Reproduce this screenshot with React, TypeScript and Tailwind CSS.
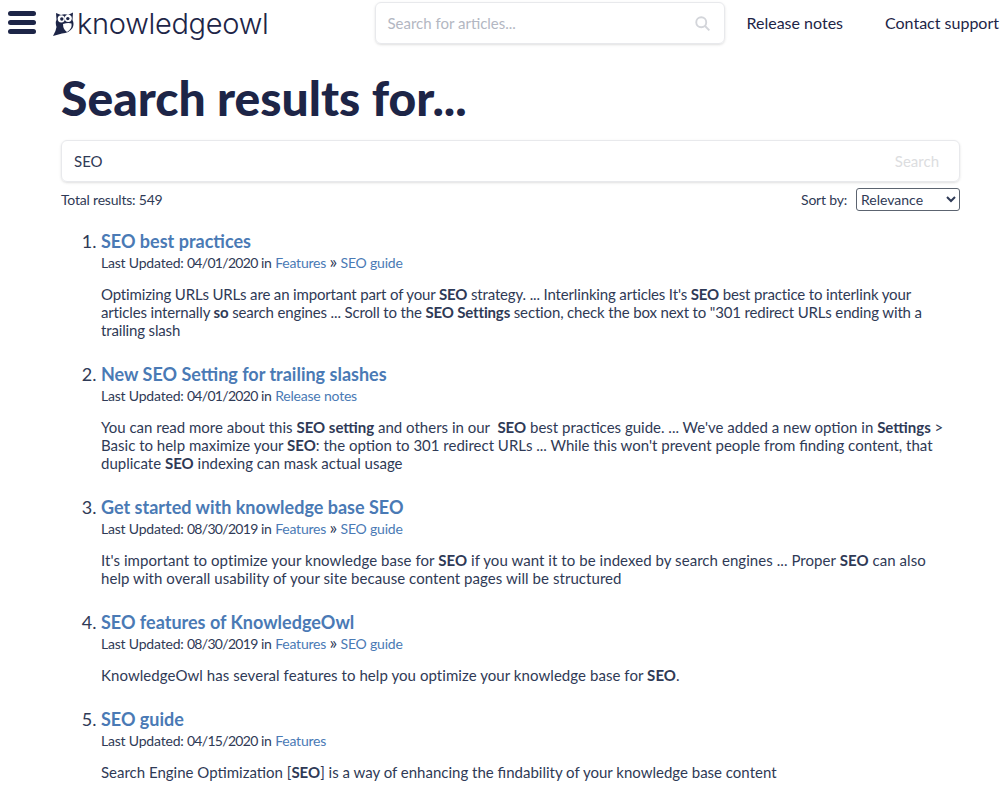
const results = [
  { title: "SEO best practices", date: "04/01/2020", crumbs: ["Features", "SEO guide"], track: "tracking-[-0.15px]", body: [
    <>Optimizing URLs URLs are an important part of your <b>SEO</b> strategy. ... Interlinking articles It's <b>SEO</b> best practice to interlink your articles internally <b>so</b> search engines ... Scroll to the <b>SEO Settings</b> section, check the box next to "301 redirect URLs ending with a trailing slash</>] },
  { title: "New SEO Setting for trailing slashes", date: "04/01/2020", crumbs: ["Release notes"], track: "tracking-normal", body: [
    <>You can read more about this <b>SEO setting</b> and others in our &nbsp;<b>SEO</b> best practices guide. ... We've added a new option in <b>Settings</b> &gt; Basic to help maximize your <b>SEO</b>: the option to 301 redirect URLs ... While this won't prevent people from finding content, that duplicate <b>SEO</b> indexing can mask actual usage</>] },
  { title: "Get started with knowledge base SEO", date: "08/30/2019", crumbs: ["Features", "SEO guide"], track: "tracking-[0.06px]", body: [
    <>It's important to optimize your knowledge base for <b>SEO</b> if you want it to be indexed by search engines ... Proper <b>SEO</b> can also help with overall usability of your site because content pages will be structured</>] },
  { title: "SEO features of KnowledgeOwl", date: "08/30/2019", crumbs: ["Features", "SEO guide"], track: "tracking-[0.06px]", body: [
    <>KnowledgeOwl has several features to help you optimize your knowledge base for <b>SEO</b>.</>] },
  { title: "SEO guide", date: "04/15/2020", crumbs: ["Features"], track: "tracking-normal", body: [
    <>Search Engine Optimization [<b>SEO</b>] is a way of enhancing the findability of your knowledge base content</>] },
];

function Owl() {
  return (
    <svg width="22" height="24" viewBox="0 0 22 24" className="shrink-0">
      <path d="M3 1 L8 3 Q12 1.5 15 3 L20 0.5 L19.5 8 Q21.5 12 19.5 16 Q16 21 9 21.5 L0 24 Q3 19 3.5 15 Q2 10 3.5 8 Z" fill="#1d2547" />
      <circle cx="8.3" cy="6.8" r="3.6" fill="#fff" />
      <circle cx="15.2" cy="6.3" r="3.6" fill="#fff" />
      <circle cx="8.8" cy="7" r="1.7" fill="#1d2547" />
      <circle cx="14.8" cy="6.6" r="1.7" fill="#1d2547" />
      <path d="M10 12 Q15 10.5 18.5 11.5 Q19.5 17 14 20 Q10 17.5 10 12 Z" fill="#fff" />
    </svg>
  );
}

export default function App() {
  return (
    <div className="w-[1005px] h-[785px] overflow-hidden bg-white text-[#2f3a56] font-['Lato','Liberation_Sans',sans-serif]">
      <header className="h-[50px] flex items-start relative">
        <div className="ml-2 mt-[11px] w-[28px] flex flex-col gap-[4px]">
          <div className="h-[5px] rounded-full bg-[#1d2547]" />
          <div className="h-[5px] rounded-full bg-[#1d2547]" />
          <div className="h-[5px] rounded-full bg-[#1d2547]" />
        </div>
        <div className="ml-[17px] mt-[12px] flex items-start">
          <Owl />
          <span className="ml-[2px] -mt-[5px] text-[29px] leading-[34px] font-light text-[#1d2547] tracking-[-0.3px] font-['Inter',sans-serif]">knowledgeowl</span>
        </div>
        <div className="ml-[107px] mt-[2px] w-[350px] h-[42px] shrink-0 rounded-md border border-[#e8e9ec] shadow-sm flex items-center justify-between pl-[11px] pr-[14px]">
          <span className="text-[15px] text-[#b3b7c2]">Search for articles...</span>
          <svg width="15" height="15" viewBox="0 0 24 24" fill="none" stroke="#d3d5da" strokeWidth="3"><circle cx="10" cy="10" r="8" /><path d="m16 16 7 7" /></svg>
        </div>
        <a className="ml-[21px] mt-[13px] text-[16px] leading-5 text-[#1d2547] whitespace-nowrap">Release notes</a>
        <a className="ml-[42px] mt-[13px] text-[16px] leading-5 text-[#1d2547] whitespace-nowrap">Contact support</a>
      </header>

      <main className="pl-[61px] pr-[45px]">
        <h1 className="mt-[20px] text-[48px] leading-[56px] font-black text-[#1d2547]">Search results for...</h1>
        <div className="mt-[14px] h-[42px] rounded-md border border-[#e8e9ec] shadow-sm flex items-center justify-between pl-3 pr-5">
          <span className="text-[15px]">SEO</span>
          <span className="text-[15px] text-[#dcdde0]">Search</span>
        </div>
        <div className="mt-[5px] h-[24px] flex items-center justify-between text-[14px] tracking-[-0.2px]">
          <span>Total results: 549</span>
          <div className="flex items-center gap-[9px]">
            <span>Sort by:</span>
            <select className="w-[104px] h-[23px] rounded-[3px] border border-[#5c6470] text-[14px] tracking-normal">
              <option>Relevance</option>
            </select>
          </div>
        </div>
        <ol className="mt-[17px] list-decimal pl-[40px]">
          {results.map((r) => (
            <li key={r.title} className="mb-[22px] marker:text-[18px]">
              <h3 className="text-[18px] leading-[26px] font-bold text-[#4a7ab5]">{r.title}</h3>
              <div className="text-[14px] leading-[18px] h-[18px] tracking-[-0.2px]">
                Last Updated: <span className="tracking-[-0.7px]">{r.date}</span> in{" "}
                {r.crumbs.map((c, i) => (
                  <span key={c}>{i > 0 && <> <span className="text-[18px] leading-[0]">»</span> </>}<a className="text-[#4a7ab5]">{c}</a></span>
                ))}
              </div>
              <p className={`mt-[13px] max-w-[851px] text-[15px] leading-[18px] ${r.track}`}>{r.body}</p>
            </li>
          ))}
        </ol>
      </main>
    </div>
  );
}
